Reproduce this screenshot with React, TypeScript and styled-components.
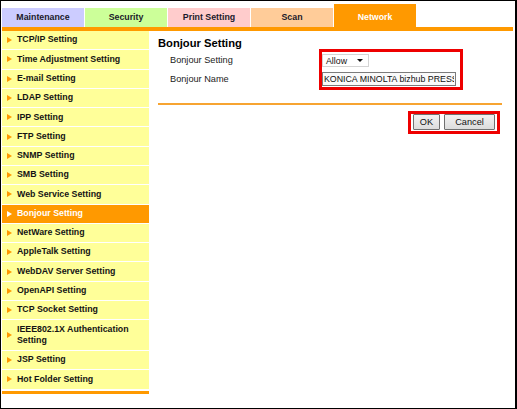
import React from 'react';
import styled, { createGlobalStyle } from 'styled-components';

const GlobalStyle = createGlobalStyle`
  body {
    margin: 0;
    font-family: "Liberation Sans", Arial, sans-serif;
    background: #fff;
  }
`;

const Frame = styled.div`
  width: 517px;
  height: 409px;
  box-sizing: border-box;
  border: 1px solid #000;
  border-right-width: 2px;
  background: #fff;
  overflow: hidden;
`;

const TabBar = styled.div`
  display: flex;
  align-items: flex-end;
  gap: 1px;
  padding: 3px 0 0 1px;
`;

const Tab = styled.div<{ $bg: string; $active?: boolean }>`
  width: 82px;
  height: ${p => (p.$active ? '23px' : '19px')};
  box-sizing: border-box;
  padding-top: ${p => (p.$active ? '4px' : '0')};
  background: ${p => p.$bg};
  color: ${p => (p.$active ? '#fff' : '#1a1a2a')};
  font-size: 8.8px;
  font-weight: bold;
  line-height: 19px;
  text-align: center;
`;

const OrangeRule = styled.div`
  height: 4px;
  margin: 0 2px 0 1px;
  background: #ff9900;
`;

const Body = styled.div`
  display: flex;
  align-items: flex-start;
`;

const Sidebar = styled.div`
  width: 147px;
  margin-left: 1px;
  display: flex;
  flex-direction: column;
  gap: 1px;
  background: #fff;
`;

const NavItem = styled.div<{ $active?: boolean }>`
  display: flex;
  align-items: center;
  gap: 5px;
  padding: 3.4px 2px 3.4px 5px;
  background: ${p => (p.$active ? '#ff9900' : '#ffff99')};
  color: ${p => (p.$active ? '#fff' : '#141414')};
  font-size: 8.8px;
  font-weight: bold;
  line-height: 11.5px;
`;

const SidebarFoot = styled.div`
  height: 3px;
  margin-top: 1px;
  background: #ff9900;
`;

const Content = styled.div`
  flex: 1;
  padding: 0 13px 0 9px;
`;

const Heading = styled.h2`
  margin: 6px 0 0;
  font-size: 11.2px;
  line-height: 12px;
  font-weight: bold;
  color: #000;
`;

const FormArea = styled.div`
  display: flex;
  margin-left: 12px;
`;

const LabelCol = styled.div`
  width: 149px;
  padding-top: 5px;
  display: flex;
  flex-direction: column;
  gap: 5px;
`;

const Label = styled.div<{ $h: number }>`
  height: ${p => p.$h}px;
  line-height: ${p => p.$h}px;
  font-size: 9.2px;
  color: #222;
`;

const RedBox = styled.div`
  border: 3px solid #ee0000;
  display: flex;
  flex-direction: column;
  align-items: flex-start;
  gap: 5px;
`;

const FieldBox = styled(RedBox)`
  width: 138px;
  padding: 2px 0 1px 0;
`;

const SelectBox = styled.div`
  width: 47px;
  height: 13px;
  box-sizing: border-box;
  border: 1px solid #d4d4d4;
  background: #fff;
  display: flex;
  align-items: center;
  justify-content: space-between;
  padding: 0 5px 0 3px;
  font-size: 8.8px;
  color: #111;
`;

const TextInput = styled.input`
  width: 134px;
  height: 14px;
  box-sizing: border-box;
  border: 1px solid #7b7b7b;
  padding: 0 1px;
  margin: 0;
  background: #fafafa;
  font-family: "Liberation Sans", Arial, sans-serif;
  font-size: 8.8px;
  color: #111;
  outline: none;
`;

const Divider = styled.div`
  height: 2px;
  margin-top: 13px;
  background: #f7a431;
`;

const ButtonRow = styled.div`
  display: flex;
  justify-content: flex-end;
  margin: 6px 2px 0 0;
`;

const ButtonBox = styled(RedBox)`
  flex-direction: row;
  gap: 4px;
  padding: 0 2px 1px 2px;
`;

const Button = styled.button<{ $w: number }>`
  width: ${p => p.$w}px;
  height: 16px;
  box-sizing: border-box;
  margin: 0;
  padding: 0;
  border: 1px solid #707070;
  border-radius: 1px;
  background: linear-gradient(#f2f2f2, #dcdcdc);
  font-family: "Liberation Sans", Arial, sans-serif;
  font-size: 9.2px;
  color: #111;
`;

const Arrow = ({ color }: { color: string }) => (
  <svg width="5" height="6" viewBox="0 0 5 6" style={{ flex: 'none' }}>
    <polygon points="0,0 5,3 0,6" fill={color} />
  </svg>
);

const tabs = [
  { label: 'Maintenance', bg: '#ccccff' },
  { label: 'Security', bg: '#ccff99' },
  { label: 'Print Setting', bg: '#ffcccc' },
  { label: 'Scan', bg: '#ffcc99' },
  { label: 'Network', bg: '#ff9900', active: true },
];

const navItems = [
  'TCP/IP Setting',
  'Time Adjustment Setting',
  'E-mail Setting',
  'LDAP Setting',
  'IPP Setting',
  'FTP Setting',
  'SNMP Setting',
  'SMB Setting',
  'Web Service Setting',
  'Bonjour Setting',
  'NetWare Setting',
  'AppleTalk Setting',
  'WebDAV Server Setting',
  'OpenAPI Setting',
  'TCP Socket Setting',
  'IEEE802.1X Authentication Setting',
  'JSP Setting',
  'Hot Folder Setting',
];

const App: React.FC = () => {
  return (
    <Frame>
      <GlobalStyle />
      <TabBar>
        {tabs.map(t => (
          <Tab key={t.label} $bg={t.bg} $active={t.active}>
            {t.label}
          </Tab>
        ))}
      </TabBar>
      <OrangeRule />
      <Body>
        <Sidebar>
          {navItems.map(item => {
            const active = item === 'Bonjour Setting';
            return (
              <NavItem key={item} $active={active}>
                <Arrow color={active ? '#fff' : '#ff9900'} />
                <span>{item}</span>
              </NavItem>
            );
          })}
          <SidebarFoot />
        </Sidebar>
        <Content>
          <Heading>Bonjour Setting</Heading>
          <FormArea>
            <LabelCol>
              <Label $h={13}>Bonjour Setting</Label>
              <Label $h={14}>Bonjour Name</Label>
            </LabelCol>
            <FieldBox>
              <SelectBox>
                <span>Allow</span>
                <svg width="6" height="3" viewBox="0 0 6 3">
                  <polygon points="0,0 6,0 3,3" fill="#111" />
                </svg>
              </SelectBox>
              <TextInput readOnly value="KONICA MINOLTA bizhub PRESS C1070" />
            </FieldBox>
          </FormArea>
          <Divider />
          <ButtonRow>
            <ButtonBox>
              <Button $w={27}>OK</Button>
              <Button $w={51}>Cancel</Button>
            </ButtonBox>
          </ButtonRow>
        </Content>
      </Body>
    </Frame>
  );
};

export default App;
